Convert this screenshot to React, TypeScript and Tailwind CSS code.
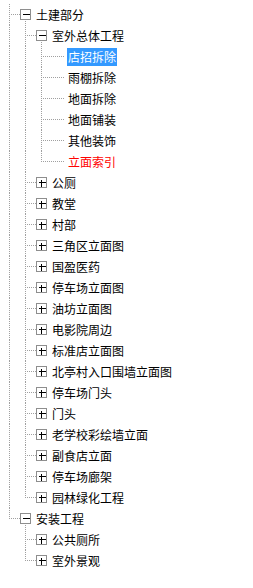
import React from 'react'

type Node = {
  label: string
  children?: Node[]
  open?: boolean
  selected?: boolean
  red?: boolean
}

type Row = {
  node: Node
  level: number
  hasNext: boolean
  guides: boolean[]
}

const TREE: Node[] = [
  {
    label: '土建部分',
    open: true,
    children: [
      {
        label: '室外总体工程',
        open: true,
        children: [
          { label: '店招拆除', selected: true },
          { label: '雨棚拆除' },
          { label: '地面拆除' },
          { label: '地面铺装' },
          { label: '其他装饰' },
          { label: '立面索引', red: true },
        ],
      },
      ...[
        '公厕',
        '教堂',
        '村部',
        '三角区立面图',
        '国盈医药',
        '停车场立面图',
        '油坊立面图',
        '电影院周边',
        '标准店立面图',
        '北亭村入口围墙立面图',
        '停车场门头',
        '门头',
        '老学校彩绘墙立面',
        '副食店立面',
        '停车场廊架',
        '园林绿化工程',
      ].map((label) => ({ label, children: [{ label: '' }] })),
    ],
  },
  {
    label: '安装工程',
    open: true,
    children: [
      { label: '公共厕所', children: [{ label: '' }] },
      { label: '室外景观', children: [{ label: '' }] },
    ],
  },
]

function flatten(nodes: Node[], level = 0, guides: boolean[] = []): Row[] {
  const rows: Row[] = []
  nodes.forEach((node, i) => {
    const hasNext = i < nodes.length - 1
    rows.push({ node, level, hasNext, guides })
    if (node.children && node.open) {
      rows.push(...flatten(node.children, level + 1, [...guides, hasNext]))
    }
  })
  return rows
}

const LINE = '#a0a0a0'
const ROW_H = 21
const MID = 10.5

function Connectors({ row }: { row: Row }) {
  const { level, hasNext, guides, node } = row
  const branch = !!node.children
  const w = 16 * level + 32
  const cx = 16 * level + 9.5
  const bx = 16 * level + 25.5
  return (
    <svg width={w} height={ROW_H} className="shrink-0" shapeRendering="crispEdges">
      {guides.map((on, a) =>
        on ? (
          <line key={a} x1={16 * a + 9.5} y1={0} x2={16 * a + 9.5} y2={ROW_H} stroke={LINE} strokeDasharray="1 1" />
        ) : null
      )}
      <line x1={cx} y1={0} x2={cx} y2={hasNext ? ROW_H : MID} stroke={LINE} strokeDasharray="1 1" />
      <line x1={cx + 1} y1={MID} x2={branch ? bx - 5 : w} y2={MID} stroke={LINE} strokeDasharray="1 1" />
      {branch && (
        <>
          {node.open && (
            <line x1={bx} y1={MID + 6} x2={bx} y2={ROW_H} stroke={LINE} strokeDasharray="1 1" />
          )}
          <rect x={bx - 5} y={MID - 5} width={10} height={10} fill="#fff" stroke="#8e8e8e" />
          <line x1={bx - 3} y1={MID} x2={bx + 4} y2={MID} stroke="#000" />
          {!node.open && <line x1={bx} y1={MID - 3} x2={bx} y2={MID + 4} stroke="#000" />}
        </>
      )}
    </svg>
  )
}

export default function App() {
  const rows = flatten(TREE)
  return (
    <div
      className="w-[253px] h-[588px] bg-white overflow-hidden pt-[4px] text-[12px] text-black"
      style={{ fontFamily: '"Noto Sans CJK SC", "Liberation Sans", sans-serif' }}
    >
      {rows.map((row, i) => (
        <div key={i} className="flex items-center h-[21px]">
          <Connectors row={row} />
          <span
            className={`ml-[3px] px-[1px] h-[18px] leading-[18px] whitespace-nowrap ${
              row.node.selected
                ? 'bg-[#3399ff] text-white'
                : row.node.red
                ? 'text-[#ff0000]'
                : 'text-black'
            }`}
          >
            {row.node.label}
          </span>
        </div>
      ))}
    </div>
  )
}
